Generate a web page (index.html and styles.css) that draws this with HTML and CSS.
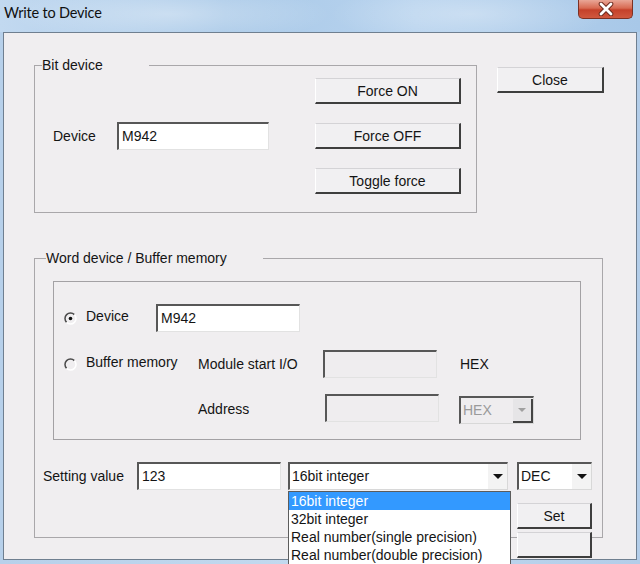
FILE: index.html
```html
<!DOCTYPE html>
<html lang="en">
<head>
    <meta charset="UTF-8">
    <title>Write to Device</title>
    <link rel="stylesheet" href="styles.css">
</head>
<body>
<div class="window">
    <div class="titlebar">
        <span class="title">Write to Device</span>
        <div class="close-x">
            <svg width="18" height="14" viewBox="0 0 18 14">
                <path d="M4 2 L14 12 M14 2 L4 12" stroke="#6b2a1e" stroke-width="4.6" stroke-linecap="round"/>
                <path d="M4 2 L14 12 M14 2 L4 12" stroke="#ffffff" stroke-width="2.8" stroke-linecap="round"/>
            </svg>
        </div>
    </div>

    <div class="client">
        <div class="top-row">
            <fieldset class="group bit-group">
                <legend class="bit-legend">Bit device</legend>
                <div class="bit-body">
                    <div class="field">
                        <span class="lbl bit-lbl">Device</span>
                        <div class="edit bit-edit">M942</div>
                    </div>
                    <div class="force-buttons">
                        <button class="btn force-btn">Force ON</button>
                        <button class="btn force-btn">Force OFF</button>
                        <button class="btn force-btn">Toggle force</button>
                    </div>
                </div>
            </fieldset>
            <button class="btn close-btn">Close</button>
        </div>

        <fieldset class="group word-group">
            <legend class="word-legend">Word device / Buffer memory</legend>

            <div class="panel">
                <div class="panel-row">
                    <svg class="radio" width="13" height="13" viewBox="0 0 13 13">
                        <path d="M10.4 2.6 A5.5 5.5 0 0 0 2.6 10.4" stroke="#4a4a4a" stroke-width="1.5" fill="none"/>
                        <path d="M2.6 10.4 A5.5 5.5 0 0 0 10.4 2.6" stroke="#ffffff" stroke-width="1.5" fill="none"/>
                        <circle cx="6.5" cy="6.5" r="1.8" fill="#111"/>
                    </svg>
                    <span class="lbl radio-lbl dev-lbl">Device</span>
                    <div class="edit word-edit">M942</div>
                </div>
                <div class="panel-row row-buffer">
                    <svg class="radio" width="13" height="13" viewBox="0 0 13 13">
                        <path d="M10.4 2.6 A5.5 5.5 0 0 0 2.6 10.4" stroke="#4a4a4a" stroke-width="1.5" fill="none"/>
                        <path d="M2.6 10.4 A5.5 5.5 0 0 0 10.4 2.6" stroke="#ffffff" stroke-width="1.5" fill="none"/>
                    </svg>
                    <span class="lbl radio-lbl buf-lbl">Buffer memory</span>
                    <span class="lbl module-lbl">Module start I/O</span>
                    <div class="edit edit-off io-edit"></div>
                    <span class="lbl hex-lbl">HEX</span>
                </div>
                <div class="panel-row row-address">
                    <span class="lbl addr-lbl">Address</span>
                    <div class="edit edit-off addr-edit"></div>
                    <div class="combo combo-off hex-combo">
                        <span class="combo-text">HEX</span>
                        <span class="combo-btn"><span class="arrow arrow-off"></span></span>
                    </div>
                </div>
            </div>

            <div class="value-row">
                <span class="lbl value-lbl">Setting value</span>
                <div class="edit value-edit">123</div>
                <div class="combo type-combo">
                    <span class="combo-text">16bit integer</span>
                    <span class="combo-btn"><span class="arrow"></span></span>
                    <ul class="drop-list">
                        <li class="selected">16bit integer</li>
                        <li>32bit integer</li>
                        <li>Real number(single precision)</li>
                        <li>Real number(double precision)</li>
                    </ul>
                </div>
                <div class="combo dec-combo">
                    <span class="combo-text">DEC</span>
                    <span class="combo-btn"><span class="arrow"></span></span>
                </div>
            </div>

            <div class="set-col">
                <button class="btn set-btn">Set</button>
                <button class="btn set-btn"></button>
            </div>
        </fieldset>
    </div>
</div>
</body>
</html>
```

FILE: styles.css
```css
body {
    margin: 0;
    font-family: "Liberation Sans", Arial, sans-serif;
    font-size: 14px;
    color: #141414;
    background: #b9d2eb;
}
.window {
    width: 640px;
    height: 564px;
    overflow: hidden;
    background: linear-gradient(to right, #b7d0ea, #c3daef 50%, #b3cde9);
}

/* title bar */
.titlebar {
    height: 32px;
    display: flex;
    align-items: flex-start;
    background:
        radial-gradient(ellipse 160px 30px at 170px 14px, rgba(255, 255, 255, 0.35), transparent),
        radial-gradient(ellipse 140px 30px at 470px 14px, rgba(255, 255, 255, 0.3), transparent),
        linear-gradient(to right, #c2d9f0, #a9c9e8 35%, #b8d3ee 65%, #a8c8e8);
}
.title {
    margin: 3px 0 0 4px;
    font-family: Lato, "Noto Sans", sans-serif;
    font-size: 14.5px;
    letter-spacing: -0.2px;
    line-height: 20px;
    color: #101010;
}
.close-x {
    margin-left: auto;
    margin-right: 7px;
    width: 53px;
    height: 18px;
    display: flex;
    align-items: center;
    justify-content: center;
    border: 1px solid #7c3124;
    border-top: none;
    border-radius: 0 0 5px 5px;
    background: linear-gradient(to bottom, #e9a697, #d86a52 45%, #c5412a 55%, #d0583e);
}

/* client area */
.client {
    width: 634px;
    height: 528px;
    margin-left: 3px;
    box-sizing: border-box;
    border: 1px solid #6f7f90;
    background: #f0eef0;
}
.top-row {
    display: flex;
    align-items: flex-start;
    padding: 24px 0 0 30px;
}

/* group boxes */
.group {
    margin: 0;
    padding: 0;
    min-width: 0;
    box-sizing: border-box;
    border: 1px solid #a9a7aa;
}
.group legend {
    padding: 0;
    line-height: 16px;
}
.bit-legend {
    margin-left: 7px;
    padding-right: 46px !important;
}
.word-legend {
    margin-left: 11px;
    padding-right: 36px !important;
}
.bit-group {
    width: 443px;
}
.bit-body {
    display: flex;
    align-items: center;
    padding: 5px 15px 18px 18px;
}
.field {
    display: flex;
    align-items: center;
}
.lbl {
    white-space: nowrap;
}
.bit-lbl {
    width: 64px;
}
.force-buttons {
    margin-left: auto;
    display: flex;
    flex-direction: column;
    gap: 19px;
}

/* buttons */
.btn {
    padding: 0;
    font-family: inherit;
    font-size: 14px;
    color: #141414;
    background: #f1f0f2;
    box-sizing: border-box;
    border-top: 1px solid #d4d3d6;
    border-left: 1px solid #ffffff;
    border-right: 2px solid #3e3e3e;
    border-bottom: 2px solid #3e3e3e;
}
.force-btn {
    width: 146px;
    height: 26px;
}
.close-btn {
    width: 107px;
    height: 26px;
    margin: 10px 0 0 20px;
}

/* edit boxes */
.edit {
    height: 28px;
    box-sizing: border-box;
    padding-left: 3px;
    line-height: 24px;
    background: #ffffff;
    border-top: 2px solid #575757;
    border-left: 2px solid #575757;
    border-right: 1px solid #e2e2e2;
    border-bottom: 1px solid #e2e2e2;
}
.edit-off {
    background: #efedef;
}
.bit-edit {
    width: 152px;
}

/* word device group */
.word-group {
    width: 569px;
    height: 288px;
    margin: 37px 0 0 30px;
}
.panel {
    width: 528px;
    margin: 15px 0 0 18px;
    padding: 22px 0 15px 0;
    box-sizing: border-box;
    border: 1px solid #a3a1a4;
}
.panel-row {
    display: flex;
    align-items: center;
}
.row-buffer {
    margin-top: 18px;
}
.row-address {
    margin-top: 16px;
    padding-left: 144px;
    align-items: flex-start;
}
.row-address .addr-lbl {
    line-height: 30px;
}
.radio {
    margin: 0 9px 0 10px;
    flex: none;
}
.dev-lbl {
    width: 70px;
    margin-top: -4px;
}
.buf-lbl {
    width: 112px;
    margin-top: -4px;
}
.module-lbl {
    width: 125px;
}
.word-edit {
    width: 144px;
}
.io-edit {
    width: 114px;
}
.hex-lbl {
    margin-left: 23px;
}
.addr-lbl {
    width: 127px;
}
.addr-edit {
    width: 114px;
}

/* combo boxes */
.combo {
    position: relative;
    height: 28px;
    display: flex;
    box-sizing: border-box;
    background: #ffffff;
    border-top: 2px solid #575757;
    border-left: 2px solid #575757;
    border-right: 1px solid #d8d8d8;
    border-bottom: 1px solid #d8d8d8;
}
.combo-text {
    flex: 1;
    padding-left: 2px;
    line-height: 24px;
}
.combo-btn {
    width: 19px;
    display: flex;
    align-items: center;
    justify-content: center;
    background: #f3f3f3;
}
.arrow {
    width: 0;
    height: 0;
    border-left: 5px solid transparent;
    border-right: 5px solid transparent;
    border-top: 5px solid #111111;
}
.combo-off {
    background: #efedef;
    color: #9a9a9a;
}
.combo-off .combo-btn {
    width: 18px;
    margin: 1px 0 0 0;
    background: #e6e5e7;
    border-right: 2px solid #444;
    border-bottom: 2px solid #444;
}
.arrow-off {
    border-left-width: 4px;
    border-right-width: 4px;
    border-top: 4px solid #a0a0a0;
}
.hex-combo {
    width: 75px;
    margin: 2px 0 0 20px;
}
.value-row {
    display: flex;
    align-items: center;
    margin-top: 22px;
    padding-left: 8px;
}
.value-lbl {
    width: 94px;
}
.value-edit {
    width: 144px;
}
.type-combo {
    width: 220px;
    margin-left: 7px;
}
.dec-combo {
    width: 75px;
    margin-left: 9px;
}

/* open drop list */
.drop-list {
    position: absolute;
    top: 27px;
    left: -2px;
    z-index: 5;
    width: 223px;
    margin: 0;
    padding: 0;
    list-style: none;
    box-sizing: border-box;
    background: #ffffff;
    border: 1px solid #5c5c5c;
    border-bottom: none;
    color: #141414;
}
.drop-list li {
    height: 18px;
    line-height: 18px;
    padding-left: 2px;
    white-space: nowrap;
}
.drop-list .selected {
    background: #3399ff;
    color: #ffffff;
}

.set-col {
    display: flex;
    flex-direction: column;
    gap: 3px;
    margin: 13px 0 0 482px;
}
.set-btn {
    width: 75px;
    height: 26px;
}
```
